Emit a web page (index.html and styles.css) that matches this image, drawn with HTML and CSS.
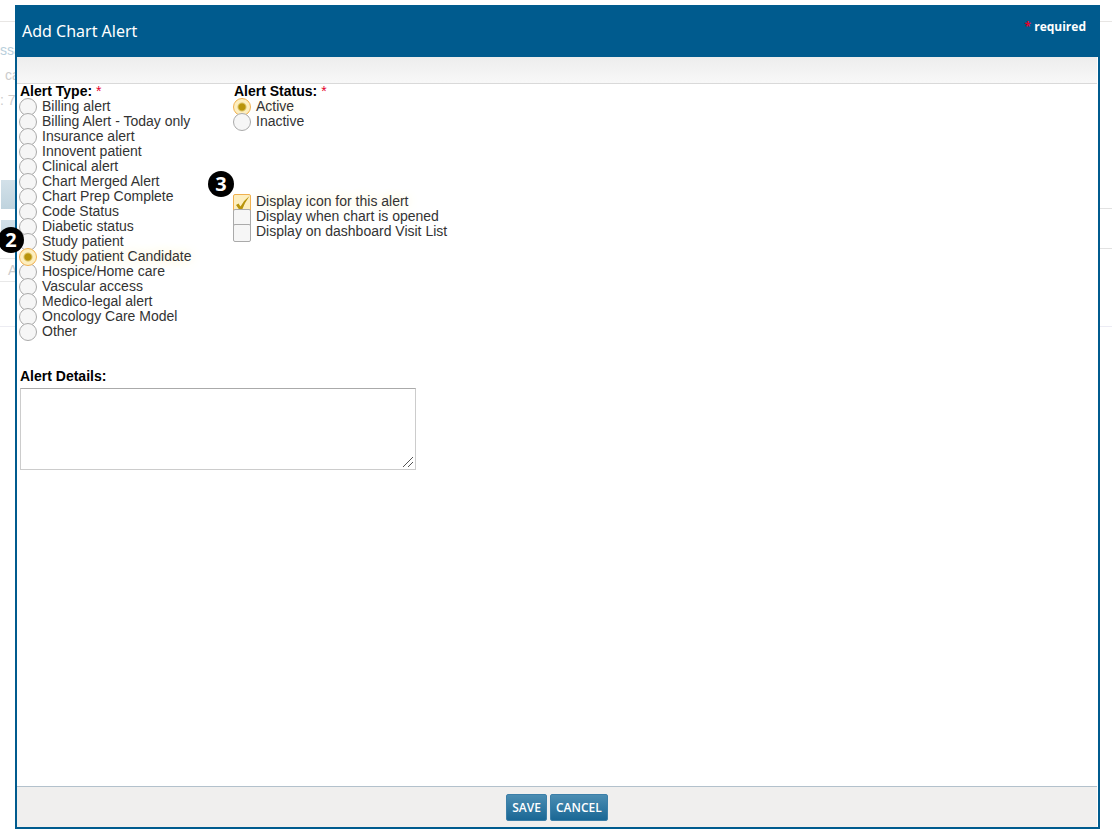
FILE: index.html
```
<!DOCTYPE html>
<html lang="en">

<head>
    <meta charset="UTF-8">
    <meta name="viewport" content="width=device-width, initial-scale=1.0">
    <title>Add Chart Alert</title>
    <link rel="stylesheet" href="styles.css">
</head>

<body>
    <!-- Faded chart page behind the dialog -->
    <div class="backdrop" aria-hidden="true">
        <div class="backdrop-top"></div>
        <div class="backdrop-notes">
            <p class="note-link">ssages</p>
            <p class="note-indent">call</p>
            <p>: 7</p>
        </div>
        <div class="backdrop-columns">
            <div class="backdrop-left">
                <div class="tab-block"></div>
                <div class="tab-block"></div>
                <div class="backdrop-cell">A</div>
                <div class="backdrop-space"></div>
            </div>
            <div class="backdrop-right">
                <div class="rule-first"></div>
                <div class="rule-second"></div>
                <div class="rule-third"></div>
            </div>
        </div>
    </div>

    <!-- Dialog -->
    <form class="dialog">
        <header class="dialog-header">
            <h1>Add Chart Alert</h1>
            <p class="required-note"><span class="star">*</span> required</p>
        </header>
        <div class="dialog-toolbar"></div>

        <div class="dialog-body">
            <div class="columns">
                <!-- Alert Type -->
                <fieldset class="column">
                    <legend>Alert Type: <span class="star">*</span></legend>
                    <label class="option"><input type="radio" name="type"><span>Billing alert</span></label>
                    <label class="option"><input type="radio" name="type"><span>Billing Alert - Today only</span></label>
                    <label class="option"><input type="radio" name="type"><span>Insurance alert</span></label>
                    <label class="option"><input type="radio" name="type"><span>Innovent patient</span></label>
                    <label class="option"><input type="radio" name="type"><span>Clinical alert</span></label>
                    <label class="option"><input type="radio" name="type"><span>Chart Merged Alert</span></label>
                    <label class="option"><input type="radio" name="type"><span>Chart Prep Complete</span></label>
                    <label class="option"><input type="radio" name="type"><span>Code Status</span></label>
                    <label class="option"><input type="radio" name="type"><span>Diabetic status</span></label>
                    <label class="option"><input type="radio" name="type"><span>Study patient</span></label>
                    <div class="marked">
                        <b class="callout callout-type">2</b>
                        <label class="option"><input type="radio" name="type" checked><span>Study patient Candidate</span></label>
                    </div>
                    <label class="option"><input type="radio" name="type"><span>Hospice/Home care</span></label>
                    <label class="option"><input type="radio" name="type"><span>Vascular access</span></label>
                    <label class="option"><input type="radio" name="type"><span>Medico-legal alert</span></label>
                    <label class="option"><input type="radio" name="type"><span>Oncology Care Model</span></label>
                    <label class="option"><input type="radio" name="type"><span>Other</span></label>
                </fieldset>

                <div class="column">
                    <!-- Alert Status -->
                    <fieldset>
                        <legend>Alert Status: <span class="star">*</span></legend>
                        <label class="option"><input type="radio" name="status" checked><span>Active</span></label>
                        <label class="option"><input type="radio" name="status"><span>Inactive</span></label>
                    </fieldset>

                    <!-- Display options -->
                    <div class="display-options marked">
                        <b class="callout callout-display">3</b>
                        <label class="option"><input type="checkbox" checked><span>Display icon for this alert</span></label>
                        <label class="option"><input type="checkbox"><span>Display when chart is opened</span></label>
                        <label class="option"><input type="checkbox"><span>Display on dashboard Visit List</span></label>
                    </div>
                </div>
            </div>

            <!-- Alert Details -->
            <div class="details">
                <label for="details">Alert Details:</label>
                <textarea id="details"></textarea>
            </div>
        </div>

        <footer class="dialog-footer">
            <button type="button">SAVE</button>
            <button type="button">CANCEL</button>
        </footer>
    </form>
</body>

</html>
```
FILE: styles.css
```
/* Global Styles */
* {
    box-sizing: border-box;
}

body {
    margin: 0;
    min-height: 100vh;
    position: relative;
    overflow: hidden;
    background: #fff;
    color: #333;
    font-family: "Liberation Sans", Arial, sans-serif;
    font-size: 14px;
    line-height: 15px;
}

h1,
p {
    margin: 0;
}

.star {
    color: #e4002b;
    font-weight: normal;
}

/* Backdrop */
.backdrop {
    color: #ccc;
}

.backdrop-top {
    height: 22px;
    border-bottom: 1px solid #e8e6e4;
}

.backdrop-notes {
    height: 158px;
    padding-top: 16px;
    line-height: 25px;
}

.note-link {
    color: #b9cfdc;
}

.note-indent {
    padding-left: 5px;
}

.backdrop-columns {
    display: flex;
    justify-content: space-between;
}

.backdrop-left,
.backdrop-right {
    width: 15px;
}

.tab-block {
    height: 29px;
    margin: 0 0 11px 1px;
    background: linear-gradient(#d3e1e9, #bfd3de);
}

.tab-block + .tab-block {
    margin-bottom: 9px;
}

.backdrop-cell {
    height: 24px;
    padding: 4px 0 0 8px;
    border-top: 1px solid #e8e8e8;
    border-bottom: 1px solid #e8e8e8;
}

.backdrop-space {
    height: 45px;
    border-bottom: 1px solid #ececf2;
}

.rule-first {
    height: 29px;
    border-bottom: 1px solid #e2e2e2;
}

.rule-second {
    height: 40px;
    border-bottom: 1px solid #e2e2e2;
}

.rule-third {
    height: 78px;
    border-bottom: 1px solid #ececf4;
}

/* Dialog */
.dialog {
    position: absolute;
    inset: 5px 12px 8px 15px;
    display: flex;
    flex-direction: column;
    background: #fff;
    border: 2px solid #005b8e;
}

.dialog-header {
    display: flex;
    justify-content: space-between;
    height: 50px;
    padding: 0 12px 0 5px;
    background: #005b8e;
    color: #fff;
    font-family: "Noto Sans", "Open Sans", sans-serif;
}

.dialog-header h1 {
    font-size: 16px;
    font-weight: normal;
    line-height: 48px;
}

.required-note {
    font-family: "Open Sans", sans-serif;
    font-size: 12px;
    font-weight: bold;
    line-height: 40px;
}

.required-note .star {
    font-weight: bold;
}

.dialog-toolbar {
    height: 27px;
    margin-right: 1px;
    background: linear-gradient(#ededed, #f8f8f8);
    border-bottom: 1px solid #d9d9d9;
}

.dialog-body {
    flex: 1;
    padding-left: 2px;
}

.columns {
    display: flex;
}

.column {
    min-width: 214px;
}

fieldset {
    margin: 0;
    padding: 0;
    border: 0;
}

legend,
.details label {
    display: block;
    padding: 0 0 0 1px;
    color: #000;
    font-weight: bold;
}

/* Options */
.option {
    display: flex;
    align-items: flex-start;
    height: 15px;
}

.option input {
    appearance: none;
    flex: none;
    width: 18px;
    height: 18px;
    margin: -1px 5px 0 0;
    background: #f6f6f6;
    border: 1px solid #aaa;
    border-radius: 50%;
}

.option input[type="checkbox"] {
    margin-top: 0;
    border-radius: 2px;
}

.option input:checked {
    background: #fdeebf;
    border-color: #f0b04e;
}

.option input[type="radio"]:checked {
    background: radial-gradient(circle, #b8940b 3px, #fdeebf 5px);
}

.option input[type="checkbox"]:checked {
    background: #fdeebf url("data:image/svg+xml,%3Csvg xmlns='http://www.w3.org/2000/svg' viewBox='0 0 16 16'%3E%3Cpath d='M2 10 4.5 8.5 6.5 11.5Q10 5 15.5 1 11 7 8 15H5.5Z' fill='%23b8940b'/%3E%3C/svg%3E") center / 16px 16px no-repeat;
}

.option input:checked + span {
    text-shadow: 0 0 12px #ffe9b5;
}

/* Numbered callouts */
.marked {
    position: relative;
}

.callout {
    position: absolute;
    z-index: 1;
    width: 26px;
    height: 26px;
    border-radius: 50%;
    background: #000;
    color: #fff;
    font-family: "Noto Sans", "Open Sans", sans-serif;
    font-size: 20px;
    line-height: 26px;
    text-align: center;
}

.callout-type {
    top: -22px;
    left: -21px;
}

.callout-display {
    top: -23px;
    left: -25px;
}

.display-options {
    margin-top: 65px;
}

/* Details */
.details {
    margin: 30px 0 0 1px;
}

.details label {
    padding: 0;
}

.details textarea {
    display: block;
    width: 396px;
    height: 82px;
    margin-top: 4px;
    border: 1px solid #ccc;
    border-top-color: #aaa;
}

.details textarea::-webkit-resizer {
    background: url("data:image/svg+xml,%3Csvg xmlns='http://www.w3.org/2000/svg' viewBox='0 0 15 15'%3E%3Cpath d='M3 13 13 3M8 13 13 8' stroke='%23555'/%3E%3C/svg%3E") center / 15px 15px no-repeat;
}

/* Footer */
.dialog-footer {
    display: flex;
    justify-content: center;
    gap: 3px;
    height: 41px;
    margin-right: 1px;
    padding: 7px 0;
    background: #f0efee;
    border-top: 1px solid #b3c1cc;
}

.dialog-footer button {
    height: 27px;
    padding: 0 5px;
    border: 1px solid #3c7fa8;
    border-radius: 2px;
    background: linear-gradient(#4b8db2, #1a6795);
    color: #fff;
    font-family: "Open Sans", sans-serif;
    font-size: 12px;
    font-weight: 600;
}
```
